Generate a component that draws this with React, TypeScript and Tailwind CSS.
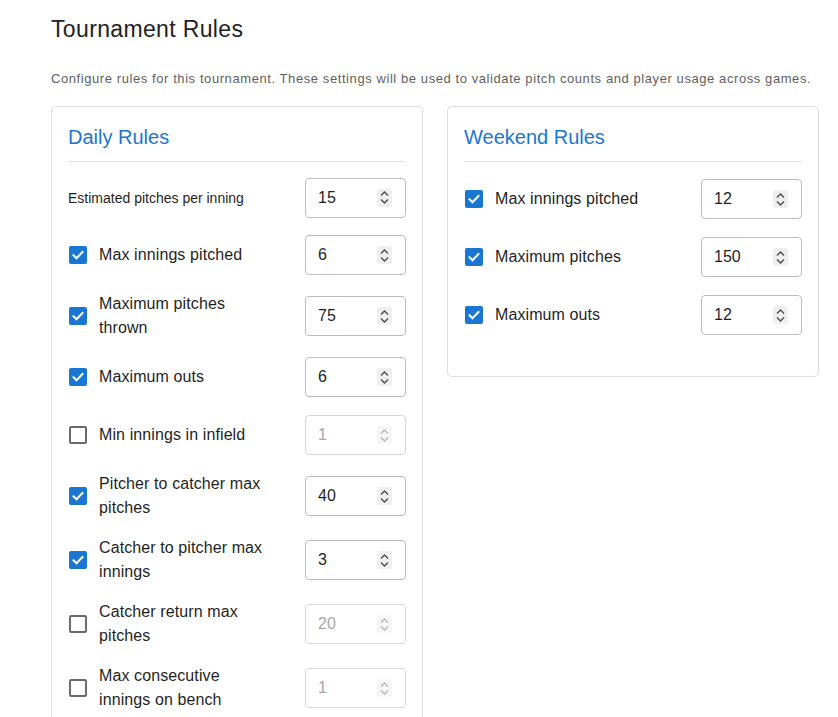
import React from 'react';

type Rule = {
  label: string;
  value: string;
  checked?: boolean;
  small?: boolean;
};

const dailyRules: Rule[] = [
  { label: 'Estimated pitches per inning', value: '15', small: true },
  { label: 'Max innings pitched', value: '6', checked: true },
  { label: 'Maximum pitches thrown', value: '75', checked: true },
  { label: 'Maximum outs', value: '6', checked: true },
  { label: 'Min innings in infield', value: '1', checked: false },
  { label: 'Pitcher to catcher max pitches', value: '40', checked: true },
  { label: 'Catcher to pitcher max innings', value: '3', checked: true },
  { label: 'Catcher return max pitches', value: '20', checked: false },
  { label: 'Max consecutive innings on bench', value: '1', checked: false },
];

const weekendRules: Rule[] = [
  { label: 'Max innings pitched', value: '12', checked: true },
  { label: 'Maximum pitches', value: '150', checked: true },
  { label: 'Maximum outs', value: '12', checked: true },
];

function Checkbox({ checked }: { checked: boolean }) {
  if (checked) {
    return (
      <span className="ml-[1px] flex h-[18px] w-[18px] shrink-0 items-center justify-center rounded-[2px] bg-[#1976d2]">
        <svg width="14" height="14" viewBox="0 0 14 14" fill="none">
          <path d="M2.5 7.2l3 3 6-6.2" stroke="white" strokeWidth="2" strokeLinecap="square" />
        </svg>
      </span>
    );
  }
  return <span className="ml-[1px] h-[18px] w-[18px] shrink-0 rounded-[2px] border-2 border-[#6b6b6b]" />;
}

function Spinner({ disabled }: { disabled: boolean }) {
  const stroke = disabled ? '#b5b5b5' : '#4a4a4a';
  return (
    <span
      className={`flex h-[18px] w-[15px] flex-col items-center justify-center gap-[3px] rounded-[3px] ${
        disabled ? 'bg-[#f6f6f6]' : 'bg-[#efefef]'
      }`}
    >
      <svg width="9" height="5" viewBox="0 0 9 5" fill="none">
        <path d="M1 4.5L4.5 1L8 4.5" stroke={stroke} strokeWidth="1.3" />
      </svg>
      <svg width="9" height="5" viewBox="0 0 9 5" fill="none">
        <path d="M1 0.5L4.5 4L8 0.5" stroke={stroke} strokeWidth="1.3" />
      </svg>
    </span>
  );
}

function NumberBox({ value, disabled }: { value: string; disabled: boolean }) {
  return (
    <div
      className={`flex h-[40px] w-[101px] shrink-0 items-center justify-between rounded-[4px] border pl-[12px] pr-[13px] text-[16px] ${
        disabled ? 'border-[#d6d6d6] text-[#a8a8a8]' : 'border-[#bdbdbd] text-[#1f1f1f]'
      }`}
    >
      <span>{value}</span>
      <Spinner disabled={disabled} />
    </div>
  );
}

function RuleRow({ rule }: { rule: Rule }) {
  const disabled = rule.checked === false;
  return (
    <div className={`flex items-center justify-between ${rule.small ? 'min-h-[41px]' : 'min-h-[42px]'}`}>
      {rule.small ? (
        <span className="text-[14px] leading-[20px] text-[#1f1f1f]">{rule.label}</span>
      ) : (
        <div className="flex items-center gap-3">
          <Checkbox checked={!!rule.checked} />
          <span className="max-w-[170px] text-[16px] leading-[24px] tracking-[0.1px] text-[#1f1f1f]">
            {rule.label}
          </span>
        </div>
      )}
      <NumberBox value={rule.value} disabled={disabled} />
    </div>
  );
}

function RuleCard({ title, rules, daily }: { title: string; rules: Rule[]; daily?: boolean }) {
  return (
    <section className="w-[372px] self-start rounded-[5px] border border-[#dedede] bg-white p-4">
      <h2 className="border-b border-[#e2e2e2] pb-[10px] text-[20px] leading-[28px] text-[#1976d2]">{title}</h2>
      <div className={`flex flex-col gap-4 ${daily ? 'mt-[15px] mb-10' : 'mt-[16px] mb-6'}`}>
        {rules.map((r) => (
          <RuleRow key={r.label} rule={r} />
        ))}
      </div>
    </section>
  );
}

export default function App() {
  return (
    <div className="min-h-screen bg-white pl-[51px] pt-[15px] font-['Liberation_Sans',Arial,sans-serif]">
      <h1 className="text-[23px] leading-[28px] tracking-[0.35px] text-[#222]">Tournament Rules</h1>
      <p className="mt-[26px] text-[13px] leading-[20px] tracking-[0.58px] text-[#5f5f5f]">
        Configure rules for this tournament. These settings will be used to validate pitch counts and player usage
        across games.
      </p>
      <div className="mt-[17px] flex items-start gap-6">
        <RuleCard title="Daily Rules" rules={dailyRules} daily />
        <RuleCard title="Weekend Rules" rules={weekendRules} />
      </div>
    </div>
  );
}
